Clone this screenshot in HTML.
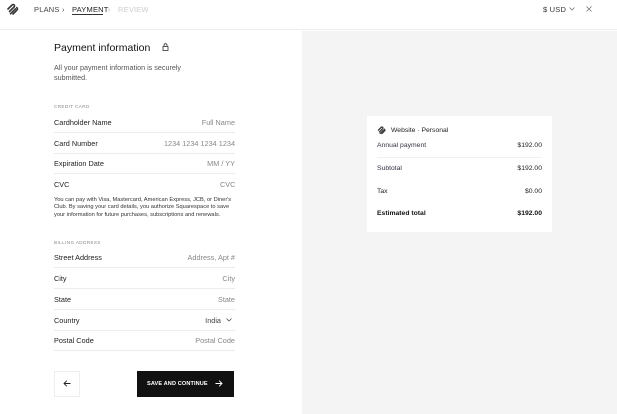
<!DOCTYPE html>
<html><head><meta charset="utf-8"><style>
*{margin:0;padding:0;box-sizing:border-box}
body{width:617px;height:414px;overflow:hidden;background:#fff;font-family:"Liberation Sans",sans-serif;color:#222;position:relative}
.a{position:absolute}
.hdr{left:0;top:0;width:617px;height:30px;border-bottom:1px solid #eee;background:#fff}
.nav{font-size:7.5px;top:5px;letter-spacing:.2px}
.gray{left:302px;top:31px;width:315px;height:383px;background:#f4f4f4}
.row{left:54px;width:181px;height:21px;border-bottom:1px solid #ececec;font-size:7.3px;color:#222}
.row span{position:absolute;top:6px}
.row .r{right:0;color:#888}
.lab{font-size:4.6px;color:#888;letter-spacing:.4px;left:54px}
.card{left:367px;top:116px;width:185px;height:116px;background:#fff}
.card div{position:absolute;font-size:6.8px;color:#222}
</style></head><body>
<div class="a hdr"></div>
<svg class="a" style="left:6px;top:3px" width="13" height="13" viewBox="0 0 13 13"><g stroke="#333" stroke-width="1.6" fill="none" stroke-linecap="round"><path d="M2 6 L6 2 Q7.5 1 8.5 2.2"/><path d="M3.5 8.5 L8.5 3.5"/><path d="M4.5 10.8 L9.5 5.8"/><path d="M7 11 L11 7 Q12 5.6 10.8 4.6"/></g></svg>
<div class="a nav" style="left:34px;color:#444">PLANS</div>
<div class="a nav" style="left:62px;color:#444">›</div>
<div class="a nav" style="left:72px;color:#222">PAYMENT</div>
<div class="a" style="left:72px;top:14px;width:31px;height:1px;background:#333"></div>
<div class="a nav" style="left:108px;color:#bbb">›</div>
<div class="a nav" style="left:118px;color:#ccc">REVIEW</div>
<div class="a nav" style="left:543px;color:#333">$ USD</div>
<svg class="a" style="left:569px;top:7px" width="6" height="4" viewBox="0 0 6 4"><path d="M.5 .5 3 3 5.5 .5" stroke="#777" fill="none" stroke-width=".8"/></svg>
<svg class="a" style="left:586px;top:6px" width="6" height="6" viewBox="0 0 6 6"><path d="M.5 .5 5.5 5.5M5.5 .5 .5 5.5" stroke="#777" stroke-width=".8"/></svg>
<div class="a gray"></div>
<div class="a" style="left:54px;top:42px;font-size:10.5px;color:#111">Payment information</div>
<svg class="a" style="left:162px;top:43px" width="7" height="8" viewBox="0 0 7 8"><rect x="1" y="3.5" width="5" height="4" fill="none" stroke="#333" stroke-width=".8"/><path d="M2 3.5V2.2a1.5 1.5 0 0 1 3 0v1.3" fill="none" stroke="#333" stroke-width=".8"/></svg>
<div class="a" style="left:54px;top:63px;width:150px;font-size:7.2px;line-height:10px;color:#555">All your payment information is securely submitted.</div>
<div class="a lab" style="top:104px">CREDIT CARD</div>
<div class="a row" style="top:112px"><span>Cardholder Name</span><span class="r">Full Name</span></div>
<div class="a row" style="top:133px"><span>Card Number</span><span class="r">1234 1234 1234 1234</span></div>
<div class="a row" style="top:153px"><span>Expiration Date</span><span class="r">MM / YY</span></div>
<div class="a" style="left:54px;top:180px;font-size:7.3px;color:#222">CVC</div>
<div class="a" style="left:220px;top:180px;font-size:7.3px;color:#888">CVC</div>
<div class="a" style="left:54px;top:197px;width:186px;font-size:5.7px;line-height:7.3px;color:#333">You can pay with Visa, Mastercard, American Express, JCB, or Diner's Club. By saving your card details, you authorize Squarespace to save your information for future purchases, subscriptions and renewals.</div>
<div class="a lab" style="top:240px">BILLING ADDRESS</div>
<div class="a row" style="top:247px"><span>Street Address</span><span class="r">Address, Apt #</span></div>
<div class="a row" style="top:268px"><span>City</span><span class="r">City</span></div>
<div class="a row" style="top:289px"><span>State</span><span class="r">State</span></div>
<div class="a row" style="top:310px"><span>Country</span><span class="r" style="right:14px;color:#444">India</span></div>
<svg class="a" style="left:226px;top:318px" width="6" height="4" viewBox="0 0 6 4"><path d="M.5 .5 3 3 5.5 .5" stroke="#555" fill="none" stroke-width=".8"/></svg>
<div class="a row" style="top:330px"><span>Postal Code</span><span class="r">Postal Code</span></div>
<div class="a" style="left:54px;top:371px;width:26px;height:26px;border:1px solid #eee"></div>
<svg class="a" style="left:63px;top:380px" width="8" height="7" viewBox="0 0 8 7"><path d="M7.5 3.5H1M3.8 .7 1 3.5 3.8 6.3" stroke="#222" fill="none" stroke-width=".9"/></svg>
<div class="a" style="left:137px;top:371px;width:97px;height:26px;background:#111"></div>
<div class="a" style="left:147px;top:381px;font-size:5.6px;font-weight:bold;color:#fff;letter-spacing:.1px">SAVE AND CONTINUE</div>
<svg class="a" style="left:215px;top:380px" width="8" height="7" viewBox="0 0 8 7"><path d="M.5 3.5H7M4.2 .7 7 3.5 4.2 6.3" stroke="#fff" fill="none" stroke-width=".9"/></svg>
<div class="a card">
<svg style="position:absolute;left:10px;top:10px" width="9" height="9" viewBox="0 0 13 13"><g stroke="#333" stroke-width="1.8" fill="none" stroke-linecap="round"><path d="M2 6 L6 2 Q7.5 1 8.5 2.2"/><path d="M3.5 8.5 L8.5 3.5"/><path d="M4.5 10.8 L9.5 5.8"/><path d="M7 11 L11 7 Q12 5.6 10.8 4.6"/></g></svg>
<div style="left:24px;top:11px;color:#222">Website · Personal</div>
<div style="left:10px;top:26px;color:#334">Annual payment</div>
<div style="right:10px;top:26px">$192.00</div>
<div style="left:10px;top:41px;width:165px;height:1px;background:#f0f0f0"></div>
<div style="left:10px;top:49px;color:#334">Subtotal</div>
<div style="right:10px;top:49px">$192.00</div>
<div style="left:10px;top:72px">Tax</div>
<div style="right:10px;top:72px">$0.00</div>
<div style="left:10px;top:94px;font-weight:bold;color:#111">Estimated total</div>
<div style="right:10px;top:94px;font-weight:bold;color:#111">$192.00</div>
</div>
</body></html>
